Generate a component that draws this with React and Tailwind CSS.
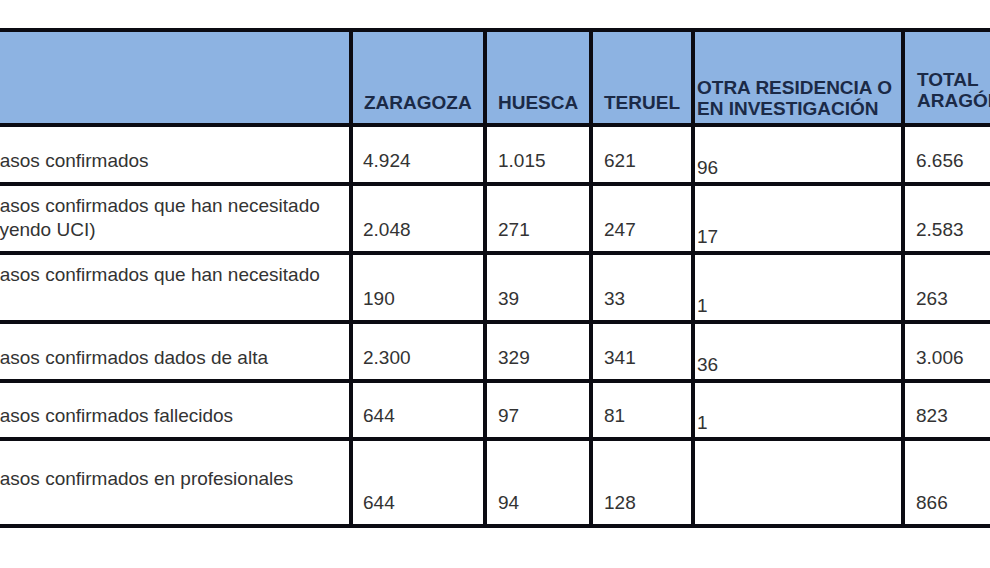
import React from "react";

const rows = [
  { label: ["Casos confirmados"], vals: ["4.924", "1.015", "621", "96", "6.656"] },
  {
    label: ["Casos confirmados que han necesitado", "shift:(incluyendo UCI)"],
    vals: ["2.048", "271", "247", "17", "2.583"],
  },
  { label: ["Casos confirmados que han necesitado", "\u00a0"], vals: ["190", "39", "33", "1", "263"] },
  { label: ["Casos confirmados dados de alta"], vals: ["2.300", "329", "341", "36", "3.006"] },
  { label: ["Casos confirmados fallecidos"], vals: ["644", "97", "81", "1", "823"] },
  { label: ["Casos confirmados en profesionales", "\u00a0"], vals: ["644", "94", "128", "", "866"] },
];

const numPad = ["pl-[10px]", "pl-[11px]", "pl-[11px]", "pl-[2px]", "pl-[11px]"];

export default function App() {
  return (
    <div
      className="w-[990px] h-[568px] overflow-hidden bg-white pt-[28px]"
      style={{ fontFamily: '"Liberation Sans", Arial, sans-serif' }}
    >
      <div className="-ml-[26px] w-max bg-[#0b0b12] p-[4px]">
        <div className="grid grid-cols-[371px_130px_102px_98px_206px_130px] grid-rows-[91px_55px_65px_65px_55px_54px_83px] gap-[4px]">
          {/* header */}
          <div className="bg-[#8db3e2]" />
          <div className="bg-[#8db3e2] flex flex-col justify-end pb-[10px] pl-[11px] text-[19px] leading-[21px] font-bold text-[#1b2a47]">
            ZARAGOZA
          </div>
          <div className="bg-[#8db3e2] flex flex-col justify-end pb-[10px] pl-[11px] text-[19px] leading-[21px] font-bold text-[#1b2a47]">
            HUESCA
          </div>
          <div className="bg-[#8db3e2] flex flex-col justify-end pb-[10px] pl-[11px] text-[19px] leading-[21px] font-bold text-[#1b2a47]">
            TERUEL
          </div>
          <div className="bg-[#8db3e2] flex flex-col justify-end pb-[4px] pl-[2px] text-[19px] leading-[21px] font-bold text-[#1b2a47]">
            <span>OTRA RESIDENCIA O</span>
            <span>EN INVESTIGACIÓN</span>
          </div>
          <div className="bg-[#8db3e2] flex flex-col justify-end pb-[12px] pl-[12px] text-[19px] leading-[21px] font-bold text-[#1b2a47]">
            <span>TOTAL</span>
            <span>ARAGÓN</span>
          </div>

          {rows.map((r, i) => (
            <React.Fragment key={i}>
              <div className="bg-white flex flex-col justify-end pb-[9px] pl-[8px] text-[19px] leading-[24px] text-[#333333] whitespace-nowrap">
                {r.label.map((l, j) =>
                  l.startsWith("shift:") ? (
                    <span key={j} className="block -ml-[32px]">
                      {l.slice(6)}
                    </span>
                  ) : (
                    <span key={j} className="block">
                      {l}
                    </span>
                  )
                )}
              </div>
              {r.vals.map((v, k) => (
                <div
                  key={k}
                  className={
                    k === 3
                      ? "bg-white flex flex-col justify-end pb-[2px] pl-[2px] text-[19px] leading-[24px] text-[#333333]"
                      : "bg-white flex flex-col justify-end pb-[9px] text-[19px] leading-[24px] text-[#333333] " +
                        numPad[k]
                  }
                >
                  <span>{v || "\u00a0"}</span>
                </div>
              ))}
            </React.Fragment>
          ))}
        </div>
      </div>
    </div>
  );
}
